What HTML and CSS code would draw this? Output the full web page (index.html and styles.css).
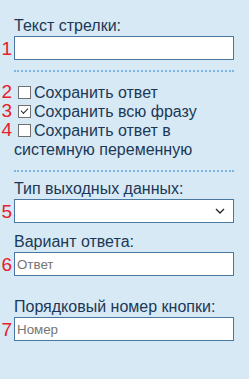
FILE: index.html
```html
<!DOCTYPE html>
<html lang="ru">
<head>
    <meta charset="UTF-8">
    <meta name="viewport" content="width=device-width, initial-scale=1.0">
    <title>Настройки кнопки</title>
    <link rel="stylesheet" href="styles.css">
</head>
<body>

<div class="panel">
    <div class="field">
        <label class="caption" for="arrowText">Текст стрелки:</label>
        <div class="control">
            <span class="num">1</span>
            <input type="text" id="arrowText" class="text-input">
        </div>
    </div>

    <div class="divider"></div>

    <div class="checks">
        <div class="check">
            <span class="num">2</span>
            <label><input type="checkbox" class="box">Сохранить ответ</label>
        </div>
        <div class="check">
            <span class="num">3</span>
            <label><input type="checkbox" class="box" checked>Сохранить всю фразу</label>
        </div>
        <div class="check">
            <span class="num">4</span>
            <label><input type="checkbox" class="box">Сохранить ответ в системную переменную</label>
        </div>
    </div>

    <div class="divider divider-bottom"></div>

    <div class="field field-type">
        <label class="caption" for="outputType">Тип выходных данных:</label>
        <div class="control">
            <span class="num">5</span>
            <select id="outputType" class="select-input">
                <option value=""></option>
            </select>
            <svg class="chevron" width="10" height="6" viewBox="0 0 10 6">
                <polyline points="1,1 5,5 9,1" fill="none" stroke="#2a2a2a" stroke-width="1.4"/>
            </svg>
        </div>
    </div>

    <div class="field field-answer">
        <label class="caption" for="answer">Вариант ответа:</label>
        <div class="control">
            <span class="num">6</span>
            <input type="text" id="answer" class="text-input" placeholder="Ответ">
        </div>
    </div>

    <div class="field field-number">
        <label class="caption" for="buttonNumber">Порядковый номер кнопки:</label>
        <div class="control">
            <span class="num">7</span>
            <input type="text" id="buttonNumber" class="text-input" placeholder="Номер">
        </div>
    </div>
</div>

</body>
</html>
```

FILE: styles.css
```css
body {
    margin: 0;
    background-color: #d6e9f5;
    font-family: "Liberation Sans", Arial, sans-serif;
    font-size: 16px;
    color: #1c3856;
}
.panel {
    padding: 16px 15px 0 14px;
}
.caption {
    display: block;
    line-height: 19px;
    margin-bottom: 1px;
}
.control {
    position: relative;
}
.num {
    position: absolute;
    left: -14px;
    top: 1px;
    width: 12px;
    text-align: right;
    font-size: 19px;
    line-height: 24px;
    color: #e8202a;
}
.text-input,
.select-input {
    display: block;
    box-sizing: border-box;
    width: 100%;
    height: 24px;
    margin: 0;
    padding: 1px 2px;
    border: 1px solid #4a77a1;
    border-radius: 0;
    background-color: white;
    font-family: "Liberation Sans", Arial, sans-serif;
    font-size: 13.33px;
    color: #222;
    outline: none;
}
.text-input::placeholder {
    color: #757575;
}
.select-input {
    appearance: none;
    -webkit-appearance: none;
}
.chevron {
    position: absolute;
    right: 9px;
    top: 9px;
}
.divider {
    margin-top: 10px;
    border-top: 2px dotted #7ab7e6;
}
.checks {
    margin-top: 11px;
}
.check {
    position: relative;
    line-height: 19px;
}
.check .num {
    top: -3px;
    line-height: 24px;
}
.box {
    appearance: none;
    -webkit-appearance: none;
    position: relative;
    width: 13px;
    height: 13px;
    margin: 0 3px 0 4px;
    vertical-align: -1px;
    border: 1px solid #707070;
    background-color: white;
}
.box:checked::after {
    content: "";
    position: absolute;
    left: 2px;
    top: 2px;
    width: 6px;
    height: 3px;
    border-left: 1.5px solid #2a2a2a;
    border-bottom: 1.5px solid #2a2a2a;
    transform: rotate(-45deg);
}
.divider-bottom {
    margin-top: 11px;
}
.field-type {
    margin-top: 7px;
}
.field-answer {
    margin-top: 9px;
}
.field-number {
    margin-top: 21px;
}
```
